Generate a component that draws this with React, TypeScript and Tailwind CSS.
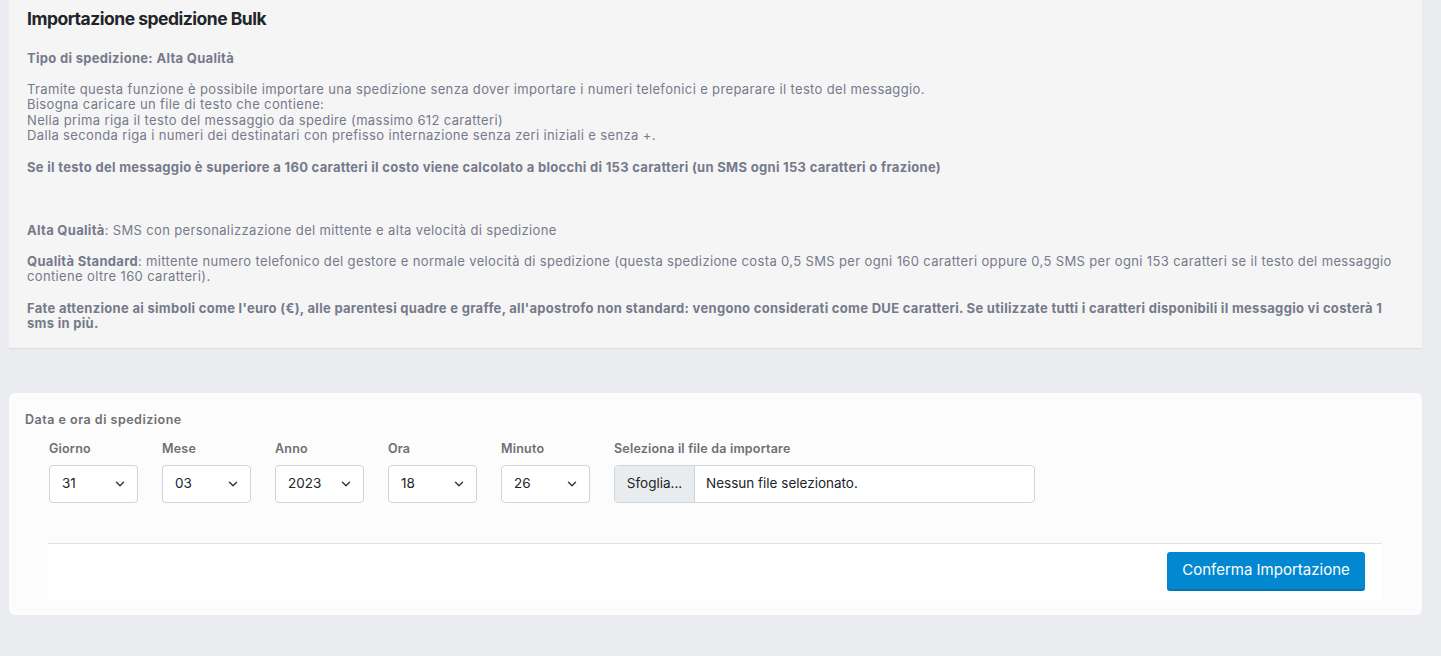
import { ChevronDown } from 'lucide-react'

const FONT = { fontFamily: 'Inter, "Noto Sans", sans-serif' }

const fields = [
  { label: 'Giorno', value: '31' },
  { label: 'Mese', value: '03' },
  { label: 'Anno', value: '2023' },
  { label: 'Ora', value: '18' },
  { label: 'Minuto', value: '26' },
]

function SelectBox({ label, value }: { label: string; value: string }) {
  return (
    <div className="flex w-[89px] flex-col">
      <label className="mb-[7px] text-[12.5px] font-semibold leading-[18px] tracking-[0.2px] text-[#6f6f73]">
        {label}
      </label>
      <div className="flex h-[38px] items-center justify-between rounded-[4px] border border-[#ced4da] bg-white pl-[12px] pr-[10px] text-[13.5px] text-[#212529]">
        <span>{value}</span>
        <ChevronDown className="h-[14px] w-[14px] text-[#343a40]" strokeWidth={2.5} />
      </div>
    </div>
  )
}

export default function App() {
  return (
    <div className="min-h-[656px] bg-[#ebecf0] px-[9px] pr-[19px]" style={FONT}>
      <div className="border-b border-[#dcdde0] bg-[#f5f5f6] px-[18px] pb-[16px] pt-[6px] text-[13px] leading-[15.5px] tracking-[0.36px] text-[#767a8a]">
        <h1 className="mb-[19px] text-[17.5px] font-bold leading-[26px] tracking-[-0.5px] text-[#212529]">
          Importazione spedizione Bulk
        </h1>
        <p className="font-bold tracking-[0.3px]">Tipo di spedizione: Alta Qualità</p>
        <p className="mt-[15px]">
          Tramite questa funzione è possibile importare una spedizione senza dover importare i numeri telefonici e
          preparare il testo del messaggio.
          <br />
          Bisogna caricare un file di testo che contiene:
          <br />
          Nella prima riga il testo del messaggio da spedire (massimo 612 caratteri)
          <br />
          Dalla seconda riga i numeri dei destinatari con prefisso internazione senza zeri iniziali e senza +.
        </p>
        <p className="mt-[16px] font-bold tracking-[0.3px]">
          Se il testo del messaggio è superiore a 160 caratteri il costo viene calcolato a blocchi di 153 caratteri (un
          SMS ogni 153 caratteri o frazione)
        </p>
        <p className="mt-[48px]">
          <b className="tracking-[0.3px]">Alta Qualità</b>: SMS con personalizzazione del mittente e alta velocità di
          spedizione
        </p>
        <p className="mt-[15px]">
          <b className="tracking-[0.3px]">Qualità Standard</b>: mittente numero telefonico del gestore e normale velocità
          di spedizione (questa spedizione costa 0,5 SMS per ogni 160 caratteri oppure 0,5 SMS per ogni 153 caratteri se
          il testo del messaggio
          <br />
          contiene oltre 160 caratteri).
        </p>
        <p className="mt-[16px] font-bold tracking-[0.3px]">
          Fate attenzione ai simboli come l'euro (€), alle parentesi quadre e graffe, all'apostrofo non standard: vengono
          considerati come DUE caratteri. Se utilizzate tutti i caratteri disponibili il messaggio vi costerà 1
          <br />
          sms in più.
        </p>
      </div>

      <div className="mt-[44px] rounded-[6px] bg-[#fcfcfc] pb-[15px] pl-[16px] pr-[40px] pt-[19px]">
        <p className="text-[12.5px] font-semibold leading-[16px] tracking-[0.5px] text-[#6f6f73]">
          Data e ora di spedizione
        </p>
        <div className="ml-[24px] mt-[12px] flex gap-[24px]">
          {fields.map((f) => (
            <SelectBox key={f.label} label={f.label} value={f.value} />
          ))}
          <div className="flex w-[421px] flex-col">
            <label className="mb-[7px] text-[12.5px] font-semibold leading-[18px] tracking-[0.2px] text-[#6f6f73]">
              Seleziona il file da importare
            </label>
            <div className="flex h-[38px] overflow-hidden rounded-[4px] border border-[#ced4da] bg-white text-[13.5px] text-[#212529]">
              <span className="flex w-[80px] items-center justify-center border-r border-[#ced4da] bg-[#e9ecef]">
                Sfoglia...
              </span>
              <span className="flex items-center pl-[11px]">Nessun file selezionato.</span>
            </div>
          </div>
        </div>
        <div className="ml-[23px] mt-[40px] flex justify-end border-t border-[#dee2e6] bg-white px-[17px] pb-[9px] pt-[8px]">
          <button className="h-[39px] w-[198px] rounded-[3px] border-b-2 border-[#0277b3] bg-[#0288d1] text-[15px] text-white">
            Conferma Importazione
          </button>
        </div>
      </div>
    </div>
  )
}
